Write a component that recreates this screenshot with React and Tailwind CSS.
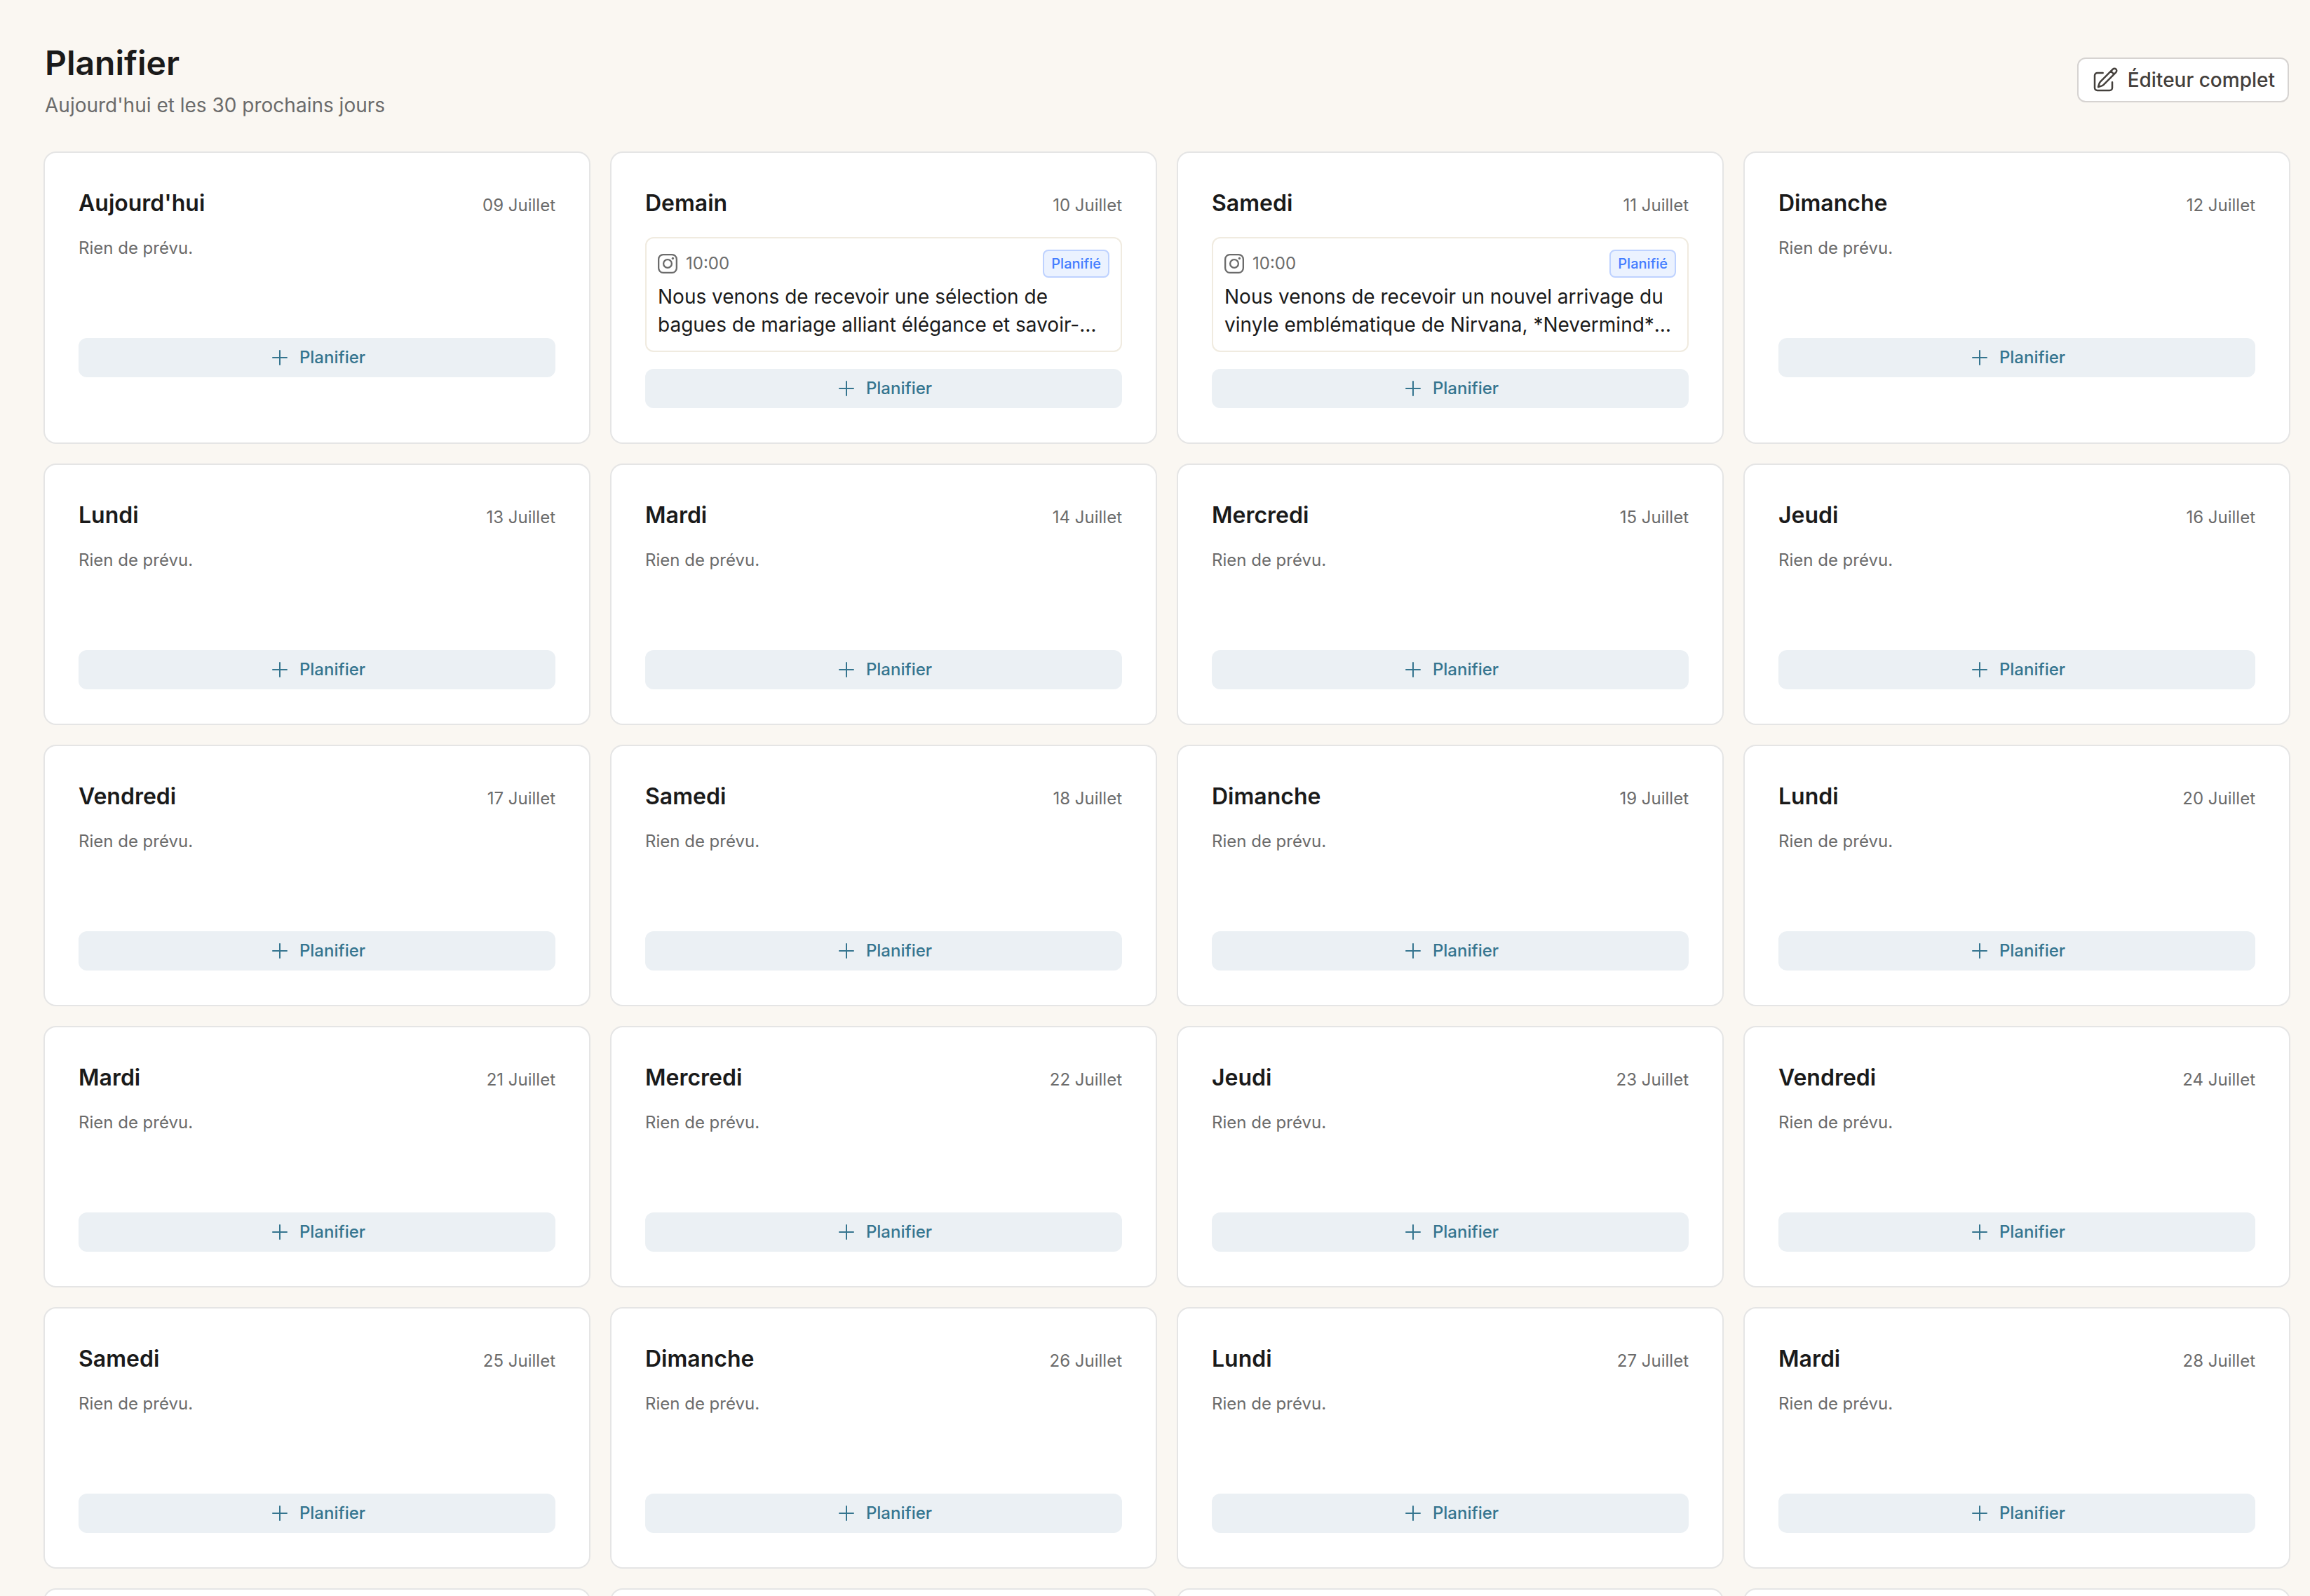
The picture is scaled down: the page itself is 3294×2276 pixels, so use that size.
import React from 'react';

const days = [
  { name: "Aujourd'hui", date: '09 Juillet' },
  {
    name: 'Demain',
    date: '10 Juillet',
    post: {
      time: '10:00',
      lines: ['Nous venons de recevoir une sélection de', 'bagues de mariage alliant élégance et savoir-'],
    },
  },
  {
    name: 'Samedi',
    date: '11 Juillet',
    post: {
      time: '10:00',
      lines: ['Nous venons de recevoir un nouvel arrivage du', 'vinyle emblématique de Nirvana, *Nevermind*'],
    },
  },
  { name: 'Dimanche', date: '12 Juillet' },
  { name: 'Lundi', date: '13 Juillet' },
  { name: 'Mardi', date: '14 Juillet' },
  { name: 'Mercredi', date: '15 Juillet' },
  { name: 'Jeudi', date: '16 Juillet' },
  { name: 'Vendredi', date: '17 Juillet' },
  { name: 'Samedi', date: '18 Juillet' },
  { name: 'Dimanche', date: '19 Juillet' },
  { name: 'Lundi', date: '20 Juillet' },
  { name: 'Mardi', date: '21 Juillet' },
  { name: 'Mercredi', date: '22 Juillet' },
  { name: 'Jeudi', date: '23 Juillet' },
  { name: 'Vendredi', date: '24 Juillet' },
  { name: 'Samedi', date: '25 Juillet' },
  { name: 'Dimanche', date: '26 Juillet' },
  { name: 'Lundi', date: '27 Juillet' },
  { name: 'Mardi', date: '28 Juillet' },
];

const PencilSquareIcon = () => (
  <svg
    className="w-10 h-10 shrink-0"
    viewBox="0 0 24 24"
    fill="none"
    stroke="currentColor"
    strokeWidth="1.5"
    strokeLinecap="round"
    strokeLinejoin="round"
  >
    <path d="m16.862 4.487 1.687-1.688a1.875 1.875 0 1 1 2.652 2.652L10.582 16.07a4.5 4.5 0 0 1-1.897 1.13L6 18l.8-2.685a4.5 4.5 0 0 1 1.13-1.897l8.932-8.931Zm0 0L19.5 7.125M18 14v4.75A2.25 2.25 0 0 1 15.75 21H5.25A2.25 2.25 0 0 1 3 18.75V8.25A2.25 2.25 0 0 1 5.25 6H10" />
  </svg>
);

const PlusIcon = () => (
  <svg
    className="w-8 h-8 shrink-0"
    viewBox="0 0 24 24"
    fill="none"
    stroke="currentColor"
    strokeWidth="1.5"
    strokeLinecap="round"
  >
    <path d="M12 4.5v15m7.5-7.5h-15" />
  </svg>
);

const InstagramIcon = () => (
  <svg className="w-7 h-7 shrink-0" viewBox="0 0 28 28" fill="none" stroke="currentColor" strokeWidth="2.3">
    <rect x="1.15" y="1.15" width="25.7" height="25.7" rx="6.5" />
    <circle cx="14" cy="14" r="5.9" />
    <circle cx="21.4" cy="6.5" r="1.7" fill="currentColor" stroke="none" />
  </svg>
);

const Post = ({ post }) => (
  <div className="border-2 border-[#f0ebe0] rounded-xl px-4 pt-4 pb-[17px]">
    <div className="flex items-center justify-between h-10">
      <div className="flex items-center gap-3 text-[#6b6b6b]">
        <InstagramIcon />
        <span className="text-2xl leading-8">{post.time}</span>
      </div>
      <span className="h-10 px-2.5 flex items-center border-2 border-[#bed2ff] bg-[#ebf2ff] text-[#447dff] rounded-lg text-[20px] font-medium">
        Planifié
      </span>
    </div>
    <p className="mt-[7px] text-[28px] leading-10 text-[#1a1a1a] whitespace-nowrap">
      {post.lines[0]}
      <br />
      {post.lines[1]}
      <span className="inline-block">…</span>
    </p>
  </div>
);

const DayCard = ({ day }) => (
  <div className="bg-white rounded-2xl ring-2 ring-[#e5e5e5] px-12 pt-12 pb-[49px]">
    <div className="flex items-baseline justify-between h-12">
      <h2 className="text-[32px] leading-12 font-semibold text-[#1a1a1a]">{day.name}</h2>
      <span className="text-2xl text-[#6b6b6b]">{day.date}</span>
    </div>
    <div className="mt-6 min-h-[120px]">
      {day.post ? <Post post={day.post} /> : <p className="text-2xl leading-8 text-[#6b6b6b]">Rien de prévu.</p>}
    </div>
    <button className="mt-6 w-full h-14 flex items-center justify-center gap-3 rounded-xl bg-[#ebf0f4] text-[#35758f] text-2xl font-medium">
      <PlusIcon />
      Planifier
    </button>
  </div>
);

const EmptyCard = () => <div className="h-[369px] bg-white rounded-2xl ring-2 ring-[#e5e5e5]" />;

const App = () => {
  return (
    <div className="w-full h-[2276px] overflow-hidden bg-[#faf7f2] pl-16 pr-[30px] pt-[57px] font-['Inter',sans-serif]">
      <header className="flex items-center justify-between h-[114px]">
        <div>
          <h1 className="text-[48px] leading-16 font-semibold text-[#1a1a1a]">Planifier</h1>
          <p className="mt-2 text-[28px] leading-10 text-[#6b6b6b]">Aujourd'hui et les 30 prochains jours</p>
        </div>
        <button className="h-16 px-[18px] flex items-center gap-3 bg-white border-2 border-[#d6d3d1] rounded-xl text-[28px] font-medium text-[#44403c]">
          <PencilSquareIcon />
          Éditeur complet
        </button>
      </header>
      <main className="mt-[47px] grid grid-cols-4 gap-8">
        {days.map((day) => (
          <DayCard key={day.date} day={day} />
        ))}
        <EmptyCard />
        <EmptyCard />
        <EmptyCard />
        <EmptyCard />
      </main>
    </div>
  );
};

export default App;
